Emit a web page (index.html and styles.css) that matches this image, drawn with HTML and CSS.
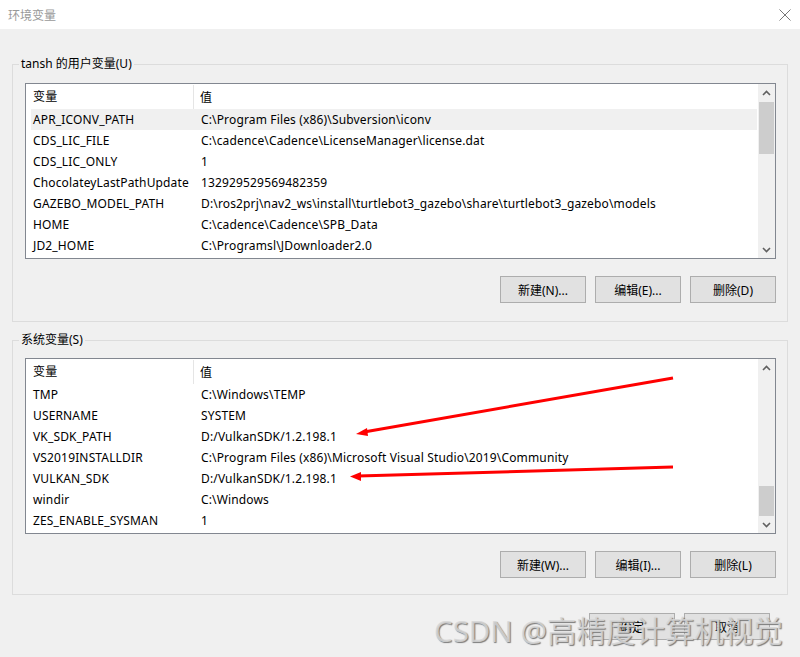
FILE: index.html
```html
<!DOCTYPE html>
<html lang="zh-CN">
<head>
  <meta charset="UTF-8">
  <title>环境变量</title>
  <link rel="stylesheet" href="styles.css">
</head>
<body>
  <div class="window">
    <div class="titlebar">
      <span class="title">环境变量</span>
      <svg class="close" width="12" height="12" viewBox="0 0 12 12">
        <path d="M0.5 0.5 L11.5 11.5 M11.5 0.5 L0.5 11.5" stroke="#777" stroke-width="1" fill="none"/>
      </svg>
    </div>

    <div class="content">
      <div class="group">
        <span class="group-label">tansh 的用户变量(U)</span>
        <div class="list">
          <div class="rows">
            <div class="head"><span class="hcol">变量</span><span class="hcol2">值</span></div>
            <div class="row selected"><span class="c1">APR_ICONV_PATH</span><span class="c2">C:\Program Files (x86)\Subversion\iconv</span></div>
            <div class="row"><span class="c1">CDS_LIC_FILE</span><span class="c2">C:\cadence\Cadence\LicenseManager\license.dat</span></div>
            <div class="row"><span class="c1">CDS_LIC_ONLY</span><span class="c2">1</span></div>
            <div class="row"><span class="c1">ChocolateyLastPathUpdate</span><span class="c2">132929529569482359</span></div>
            <div class="row"><span class="c1">GAZEBO_MODEL_PATH</span><span class="c2">D:\ros2prj\nav2_ws\install\turtlebot3_gazebo\share\turtlebot3_gazebo\models</span></div>
            <div class="row"><span class="c1">HOME</span><span class="c2">C:\cadence\Cadence\SPB_Data</span></div>
            <div class="row"><span class="c1">JD2_HOME</span><span class="c2">C:\Programsl\JDownloader2.0</span></div>
          </div>
          <div class="scrollbar">
            <div class="arrow"><svg width="9" height="6" viewBox="0 0 9 6"><path d="M1 5 L4.5 1.5 L8 5" stroke="#606060" stroke-width="1.6" fill="none"/></svg></div>
            <div class="track"><div class="thumb thumb-top"></div></div>
            <div class="arrow"><svg width="9" height="6" viewBox="0 0 9 6"><path d="M1 1 L4.5 4.5 L8 1" stroke="#606060" stroke-width="1.6" fill="none"/></svg></div>
          </div>
        </div>
        <div class="buttons">
          <button class="btn">新建(N)...</button>
          <button class="btn">编辑(E)...</button>
          <button class="btn">删除(D)</button>
        </div>
      </div>

      <div class="group group-system">
        <span class="group-label">系统变量(S)</span>
        <div class="list">
          <div class="rows">
            <div class="head"><span class="hcol">变量</span><span class="hcol2">值</span></div>
            <div class="row"><span class="c1">TMP</span><span class="c2">C:\Windows\TEMP</span></div>
            <div class="row"><span class="c1">USERNAME</span><span class="c2">SYSTEM</span></div>
            <div class="row"><span class="c1">VK_SDK_PATH</span><span class="c2">D:/VulkanSDK/1.2.198.1</span></div>
            <div class="row"><span class="c1">VS2019INSTALLDIR</span><span class="c2">C:\Program Files (x86)\Microsoft Visual Studio\2019\Community</span></div>
            <div class="row"><span class="c1">VULKAN_SDK</span><span class="c2">D:/VulkanSDK/1.2.198.1</span></div>
            <div class="row"><span class="c1">windir</span><span class="c2">C:\Windows</span></div>
            <div class="row"><span class="c1">ZES_ENABLE_SYSMAN</span><span class="c2">1</span></div>
          </div>
          <div class="scrollbar">
            <div class="arrow"><svg width="9" height="6" viewBox="0 0 9 6"><path d="M1 5 L4.5 1.5 L8 5" stroke="#606060" stroke-width="1.6" fill="none"/></svg></div>
            <div class="track track-end"><div class="thumb thumb-bottom"></div></div>
            <div class="arrow"><svg width="9" height="6" viewBox="0 0 9 6"><path d="M1 1 L4.5 4.5 L8 1" stroke="#606060" stroke-width="1.6" fill="none"/></svg></div>
          </div>
        </div>
        <div class="buttons">
          <button class="btn">新建(W)...</button>
          <button class="btn">编辑(I)...</button>
          <button class="btn">删除(L)</button>
        </div>
      </div>

      <div class="footer">
        <button class="btn">确定</button>
        <button class="btn">取消</button>
      </div>
    </div>

    <!-- red annotation arrows drawn over the list -->
    <svg class="marks" width="800" height="657" viewBox="0 0 800 657">
      <line x1="673" y1="378" x2="364" y2="432" stroke="#f00" stroke-width="3"/>
      <path d="M356 434 L367 428 L368 436 Z" fill="#f00"/>
      <line x1="673" y1="467" x2="358" y2="476" stroke="#f00" stroke-width="3"/>
      <path d="M350 476.5 L361 472 L361 481 Z" fill="#f00"/>
    </svg>

    <div class="watermark">CSDN @高精度计算机视觉</div>
  </div>
</body>
</html>
```

FILE: styles.css
```css
* {
  margin: 0;
  padding: 0;
  box-sizing: border-box;
}

body {
  width: 800px;
  height: 657px;
  overflow: hidden;
  background-color: #f0f0f0;
  color: #000;
  font-family: "Segoe UI", "Noto Sans", "Noto Sans CJK SC", sans-serif;
  font-size: 12px;
}

.window {
  position: relative;
  height: 657px;
}

.titlebar {
  height: 29px;
  background-color: #fff;
  display: flex;
  align-items: center;
  justify-content: space-between;
  padding: 0 9px 0 8px;
}

.title {
  color: #999;
}

.content {
  padding: 35px 12px 0 12px;
}

.group {
  position: relative;
  border: 1px solid #dcdcdc;
  padding: 18px 11px 18px 12px;
}

.group-system {
  margin-top: 18px;
  padding-top: 17px;
  padding-bottom: 16px;
}

.group-label {
  position: absolute;
  top: -9px;
  left: 6px;
  padding: 0 2px;
  line-height: 16px;
  background-color: #f0f0f0;
}

.list {
  display: flex;
  height: 176px;
  background-color: #fff;
  border: 1px solid #828790;
}

.rows {
  flex: 1;
  overflow: hidden;
  padding: 0 1px 0 5px;
  letter-spacing: 0.15px;
}

.head {
  display: flex;
  height: 25px;
  align-items: center;
}

.hcol {
  width: 163px;
  padding-left: 2px;
  height: 24px;
  line-height: 24px;
  border-right: 1px solid #e5e5e5;
}

.hcol2 {
  padding-left: 6px;
}

.row {
  display: flex;
  height: 21px;
  line-height: 21px;
  white-space: nowrap;
}

.row.selected {
  background-color: #f0f0f0;
}

.c1 {
  width: 168px;
  padding-left: 2px;
}

.c2 {
  padding-left: 2px;
}

.scrollbar {
  width: 17px;
  background-color: #f0f0f0;
  display: flex;
  flex-direction: column;
}

.arrow {
  height: 17px;
  display: flex;
  align-items: center;
  justify-content: center;
}

.track {
  flex: 1;
  display: flex;
  flex-direction: column;
  padding: 1px 1px 0 1px;
}

.track-end {
  justify-content: flex-end;
  padding-top: 0;
}

.thumb {
  background-color: #cdcdcd;
}

.thumb-top {
  height: 52px;
}

.thumb-bottom {
  height: 30px;
}

.buttons {
  display: flex;
  justify-content: flex-end;
  gap: 9px;
  margin-top: 17px;
}

.btn {
  width: 86px;
  height: 27px;
  background-color: #e1e1e1;
  border: 1px solid #adadad;
  border-radius: 0;
  font-family: inherit;
  font-size: 12px;
  color: #000;
}

.footer {
  display: flex;
  justify-content: flex-end;
  gap: 9px;
  margin-top: 18px;
  padding-right: 18px;
}

.marks {
  position: absolute;
  top: 0;
  left: 0;
  pointer-events: none;
}

.watermark {
  position: absolute;
  left: 434px;
  top: 609px;
  font-family: "Noto Sans", "Noto Sans CJK SC", sans-serif;
  font-size: 29.5px;
  line-height: 44px;
  color: rgba(215, 215, 215, 0.85);
  text-shadow: 1px 1px 1px #7a7a7a;
  white-space: nowrap;
}
```
